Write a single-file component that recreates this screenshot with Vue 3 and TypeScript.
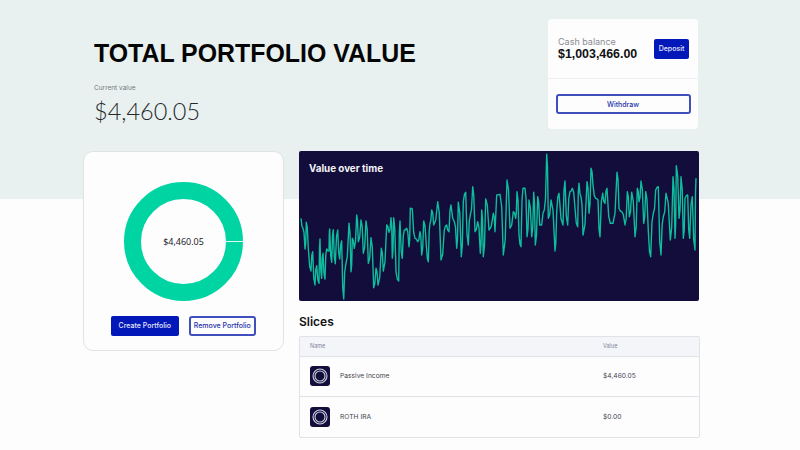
<script setup lang="ts">
const slices = [
  { name: "Passive Income", value: "$4,460.05" },
  { name: "ROTH IRA", value: "$0.00" },
];

// traced from the chart, in px relative to the chart's box
const leftTrace = [
  18,220,24,250,30,312,34,232,40,310,48,378,53,320,60,420,65,362,72,415,75,282,80,400,84,325,90,402,95,312,102,318,
  104,252,110,352,115,254,121,356,128,255,134,342,140,288,146,462,152,360,162,235,168,380,172,280,178,310,185,210,
  190,290,198,225,205,325,213,228,220,355,228,278,236,428,243,370,249,420,259,310,265,378,275,240,282,262,288,218,
  292,340,296,218,303,380,311,408,315,228,322,340,328,255,335,250,342,305,346,190,352,192,360,280,368,290,375,260,
  380,330,386,228,394,300,400,350,405,235,410,195,416,240,428,170,438,345,448,255,455,240,462,260,468,180,478,230,
  485,310,490,172,499,335,505,170,512,142,520,300,526,210,533,125,540,260,548,230,556,325,560,195,565,335,572,162,
  582,255,595,205,600,260,
];
const rightTrace = [
  5,150,15,148,25,330,36,105,45,250,55,200,62,220,66,140,72,270,78,305,84,130,90,130,96,275,102,165,110,275,116,142,
  121,300,128,155,134,240,140,240,148,195,155,28,160,220,168,165,180,318,185,200,192,145,204,240,210,108,218,240,
  225,140,232,130,240,190,248,245,252,115,258,155,264,270,276,110,282,205,288,70,294,120,302,160,309,165,315,275,
  323,145,330,175,336,130,346,235,354,235,366,82,372,190,380,200,390,240,397,140,403,215,410,142,420,275,427,130,
  432,170,438,108,446,235,452,140,460,258,467,335,475,205,482,135,490,125,498,330,505,215,513,145,526,285,534,95,
  540,280,544,62,552,220,558,95,565,280,570,160,578,150,584,280,592,155,600,315,603,100,
];

function toPoints(trace: number[], offset: number) {
  const out: string[] = [];
  for (let i = 0; i < trace.length; i += 2) {
    const x = (trace[i] + offset) / 3 - 4;
    const y = trace[i + 1] / 3 - 6;
    out.push(`${x.toFixed(1)},${y.toFixed(1)}`);
    // small wiggle between traced points so the line reads as dense as the original
    if (i + 3 < trace.length) {
      const nx = (trace[i + 2] + offset) / 3 - 4;
      const ny = trace[i + 3] / 3 - 6;
      const wiggle = (i % 4 === 0 ? 0.3 : -0.3) * Math.abs(ny - y);
      out.push(`${((x + nx) / 2).toFixed(1)},${((y + ny) / 2 + wiggle).toFixed(1)}`);
    }
  }
  return out;
}

const chartPoints = [...toPoints(leftTrace, 0), ...toPoints(rightTrace, 600)].join(" ");
</script>

<template>
  <div class="page">
    <header class="top">
      <div class="top__title">
        <h1>TOTAL PORTFOLIO VALUE</h1>
        <div class="top__label">Current value</div>
        <div class="top__value">$4,460.05</div>
      </div>
      <aside class="cash">
        <div class="cash__row">
          <div>
            <div class="cash__label">Cash balance</div>
            <div class="cash__value">$1,003,466.00</div>
          </div>
          <button class="btn btn--solid cash__deposit">Deposit</button>
        </div>
        <div class="cash__foot">
          <button class="btn btn--outline cash__withdraw">Withdraw</button>
        </div>
      </aside>
    </header>

    <main class="content">
      <section class="donut-card">
        <div class="donut">
          <svg width="119" height="119" viewBox="0 0 119 119">
            <circle cx="59.5" cy="59.5" r="51" fill="none" stroke="#00d4a2" stroke-width="17" />
            <line x1="102" y1="59.5" x2="119" y2="59.5" stroke="#e4f8f2" stroke-width="1" />
          </svg>
          <span class="donut__label">$4,460.05</span>
        </div>
        <div class="donut-card__actions">
          <button class="btn btn--solid">Create Portfolio</button>
          <button class="btn btn--outline">Remove Portfolio</button>
        </div>
      </section>

      <section class="detail">
        <div class="chart">
          <div class="chart__title">Value over time</div>
          <svg class="chart__line" width="400" height="150" viewBox="0 0 400 150">
            <polyline :points="chartPoints" fill="none" stroke="#0fbc9c" stroke-width="1.4" stroke-linejoin="round" />
          </svg>
        </div>

        <h2>Slices</h2>
        <div class="table">
          <div class="table__row table__row--head">
            <span>Name</span>
            <span>Value</span>
          </div>
          <div v-for="slice in slices" :key="slice.name" class="table__row">
            <span class="table__name">
              <svg class="table__icon" width="20" height="20" viewBox="0 0 20 20">
                <rect width="20" height="20" rx="3" fill="#120d3a" />
                <circle cx="10" cy="10" r="7" fill="none" stroke="#cfd2e4" stroke-width="1.1" />
                <circle cx="10" cy="10" r="5" fill="none" stroke="#cfd2e4" stroke-width="1.1" />
              </svg>
              {{ slice.name }}
            </span>
            <span>{{ slice.value }}</span>
          </div>
        </div>
      </section>
    </main>
  </div>
</template>

<style>
html,
body {
  margin: 0;
  background: #fdfdfe;
}
</style>

<style scoped>
.page {
  width: 800px;
  height: 450px;
  overflow: hidden;
  box-sizing: border-box;
  padding: 19px 100px 0 83px;
  background: linear-gradient(#e8f1ef 199px, #fdfdfe 199px);
  font-family: Inter, "Liberation Sans", sans-serif;
  color: #16161d;
}

.top {
  display: flex;
  justify-content: space-between;
  height: 132px;
  padding-right: 2px;
}

.top__title {
  padding: 19px 0 0 11px;
}

h1 {
  margin: 0;
  font: 700 24.9px/30px "Liberation Sans", sans-serif;
  color: #050505;
}

.top__label {
  margin-top: 16px;
  font-size: 6.5px;
  line-height: 8px;
  color: #74767c;
}

.top__value {
  margin-top: 3px;
  font: 300 23.5px/32px Lato, "Open Sans", sans-serif;
  color: #26272c;
}

.cash {
  width: 150px;
  height: 110px;
  border-radius: 4px;
  background: #fdfdfe;
}

.cash__row {
  display: flex;
  align-items: center;
  justify-content: space-between;
  height: 60px;
  box-sizing: border-box;
  padding: 0 9px 0 10px;
  border-bottom: 1px solid #eef1f2;
}

.cash__label {
  font-size: 9px;
  line-height: 11px;
  color: #8b8c92;
}

.cash__value {
  font: 700 12.4px/15px "Liberation Sans", sans-serif;
  color: #111;
}

.cash__deposit {
  width: 35px;
}

.cash__foot {
  padding: 15px 7.5px;
}

.cash__withdraw {
  width: 135px;
  font-weight: 600;
}

.btn {
  display: block;
  height: 20px;
  padding: 0;
  border-radius: 2px;
  font: 500 7px/1 Inter, "Liberation Sans", sans-serif;
  box-sizing: border-box;
}

.btn--solid {
  border: none;
  background: #0318b8;
  color: #e6e8fa;
}

.btn--outline {
  border: 2px solid #3f4fbc;
  border-radius: 3px;
  background: #fdfdfe;
  color: #2231a8;
}

.content {
  display: flex;
  align-items: flex-start;
  gap: 15px;
}

.donut-card {
  display: flex;
  flex-direction: column;
  align-items: center;
  width: 201px;
  height: 200px;
  box-sizing: border-box;
  padding-top: 29.5px;
  border: 1px solid #dfe3e3;
  border-radius: 10px;
  background: #fdfdfe;
}

.donut {
  position: relative;
  width: 119px;
  height: 119px;
}

.donut svg {
  display: block;
}

.donut__label {
  position: absolute;
  inset: 0;
  display: flex;
  align-items: center;
  justify-content: center;
  font: 400 9px/1 "Open Sans", sans-serif;
  color: #111118;
}

.donut-card__actions {
  display: flex;
  gap: 10px;
  margin-top: 15px;
}

.donut-card__actions .btn {
  width: 67.5px;
}

.detail {
  width: 401px;
}

.chart {
  position: relative;
  width: 400px;
  height: 150px;
  border-radius: 2px;
  background: #120d3a;
  overflow: hidden;
}

.chart__title {
  position: relative;
  z-index: 1;
  padding: 11px 10px 0;
  font: 700 9.8px/13px Inter, "Liberation Sans", sans-serif;
  color: #f4f4f8;
}

.chart__line {
  position: absolute;
  left: 0;
  top: 0;
}

h2 {
  margin: 13px 0 7px;
  font: 600 12px/15px Inter, "Liberation Sans", sans-serif;
  color: #111;
}

.table {
  border: 1px solid #dfe2e6;
  border-radius: 2px;
  font-size: 6.7px;
  color: #44454c;
}

.table__row {
  display: grid;
  grid-template-columns: 293px 1fr;
  align-items: center;
  height: 40.5px;
  padding-left: 10px;
  box-sizing: border-box;
  border-top: 1px solid #dfe2e6;
}

.table__row--head {
  height: 18.5px;
  border-top: none;
  background: #f3f5f8;
  font-size: 5.5px;
  color: #8183a0;
}

.table__name {
  display: flex;
  align-items: center;
  gap: 10px;
}

.table__icon {
  display: block;
}
</style>
